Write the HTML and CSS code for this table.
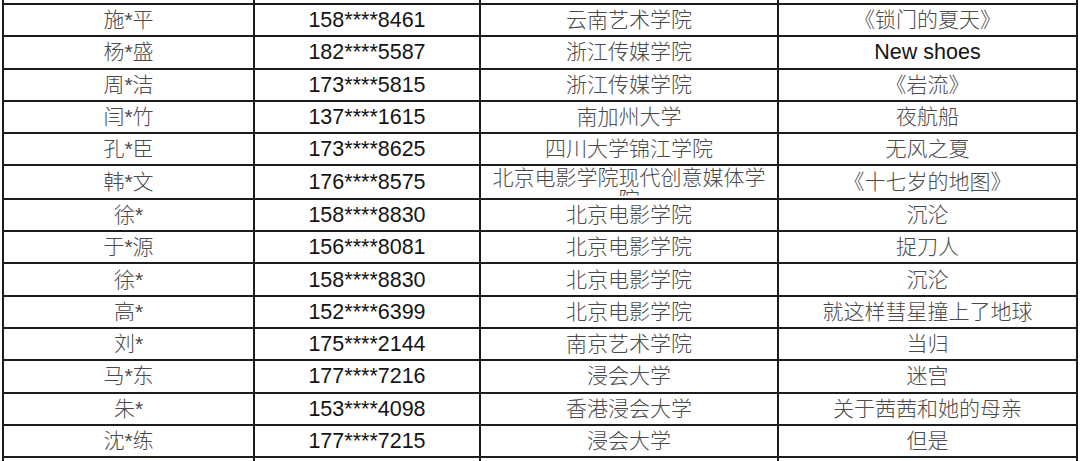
FILE: index.html
```html
<!DOCTYPE html>
<html lang="zh-CN">
<head>
<meta charset="utf-8">
<title>名单</title>
<link rel="stylesheet" href="styles.css">
</head>
<body>
<div class="sheet">
<table class="grid">
<colgroup><col class="c1"><col class="c2"><col class="c3"><col class="c4"></colgroup>
<tbody>
<tr class="stub"><td></td><td></td><td></td><td></td></tr>
<tr><td class="zh">施*平</td><td class="num">158****8461</td><td class="zh">云南艺术学院</td><td class="zh">《锁门的夏天》</td></tr>
<tr><td class="zh">杨*盛</td><td class="num">182****5587</td><td class="zh">浙江传媒学院</td><td class="num">New shoes</td></tr>
<tr><td class="zh">周*洁</td><td class="num">173****5815</td><td class="zh">浙江传媒学院</td><td class="zh">《岩流》</td></tr>
<tr><td class="zh">闫*竹</td><td class="num">137****1615</td><td class="zh">南加州大学</td><td class="zh">夜航船</td></tr>
<tr><td class="zh">孔*臣</td><td class="num">173****8625</td><td class="zh">四川大学锦江学院</td><td class="zh">无风之夏</td></tr>
<tr><td class="zh">韩*文</td><td class="num">176****8575</td><td class="zh wrap"><div class="clip">北京电影学院现代创意媒体学院</div></td><td class="zh">《十七岁的地图》</td></tr>
<tr><td class="zh">徐*</td><td class="num">158****8830</td><td class="zh">北京电影学院</td><td class="zh">沉沦</td></tr>
<tr><td class="zh">于*源</td><td class="num">156****8081</td><td class="zh">北京电影学院</td><td class="zh">捉刀人</td></tr>
<tr><td class="zh">徐*</td><td class="num">158****8830</td><td class="zh">北京电影学院</td><td class="zh">沉沦</td></tr>
<tr><td class="zh">高*</td><td class="num">152****6399</td><td class="zh">北京电影学院</td><td class="zh">就这样彗星撞上了地球</td></tr>
<tr><td class="zh">刘*</td><td class="num">175****2144</td><td class="zh">南京艺术学院</td><td class="zh">当归</td></tr>
<tr><td class="zh">马*东</td><td class="num">177****7216</td><td class="zh">浸会大学</td><td class="zh">迷宫</td></tr>
<tr><td class="zh">朱*</td><td class="num">153****4098</td><td class="zh">香港浸会大学</td><td class="zh">关于茜茜和她的母亲</td></tr>
<tr><td class="zh">沈*练</td><td class="num">177****7215</td><td class="zh">浸会大学</td><td class="zh">但是</td></tr>
<tr class="stub"><td></td><td></td><td></td><td></td></tr>
</tbody>
</table>
</div>
</body>
</html>
```

FILE: styles.css
```css
html, body {
  margin: 0;
  padding: 0;
  background: #ffffff;
}
.sheet {
  width: 1080px;
  height: 461px;
  overflow: hidden;
  padding-left: 2px;
  box-sizing: border-box;
}
.grid {
  border-collapse: collapse;
  table-layout: fixed;
  width: 1076px;
}
.c1 { width: 251px; }
.c2 { width: 226px; }
.c3 { width: 298px; }
.c4 { width: 299px; }
.grid td {
  border: 2px solid #1c1c1c;
  height: 30.3px;
  padding: 0 4px;
  text-align: center;
  vertical-align: middle;
  white-space: nowrap;
  overflow: hidden;
}
.grid tr.stub td {
  height: 3px;
  border-top: none;
  border-bottom-width: 2px;
}
.grid tr:last-child td {
  border-bottom: none;
  height: 10px;
}
.zh {
  font-family: "Liberation Sans", "Noto Sans CJK SC", sans-serif;
  font-size: 21px;
  font-weight: 300;
  color: #4a4a4a;
  line-height: 24px;
}
.num {
  font-family: "Liberation Sans", Arial, sans-serif;
  font-size: 21.5px;
  color: #141414;
  line-height: 24px;
}
.grid td.wrap {
  white-space: normal;
  vertical-align: top;
  padding-top: 1px;
}
.clip {
  height: 29px;
  overflow: hidden;
  line-height: 22px;
}
```
